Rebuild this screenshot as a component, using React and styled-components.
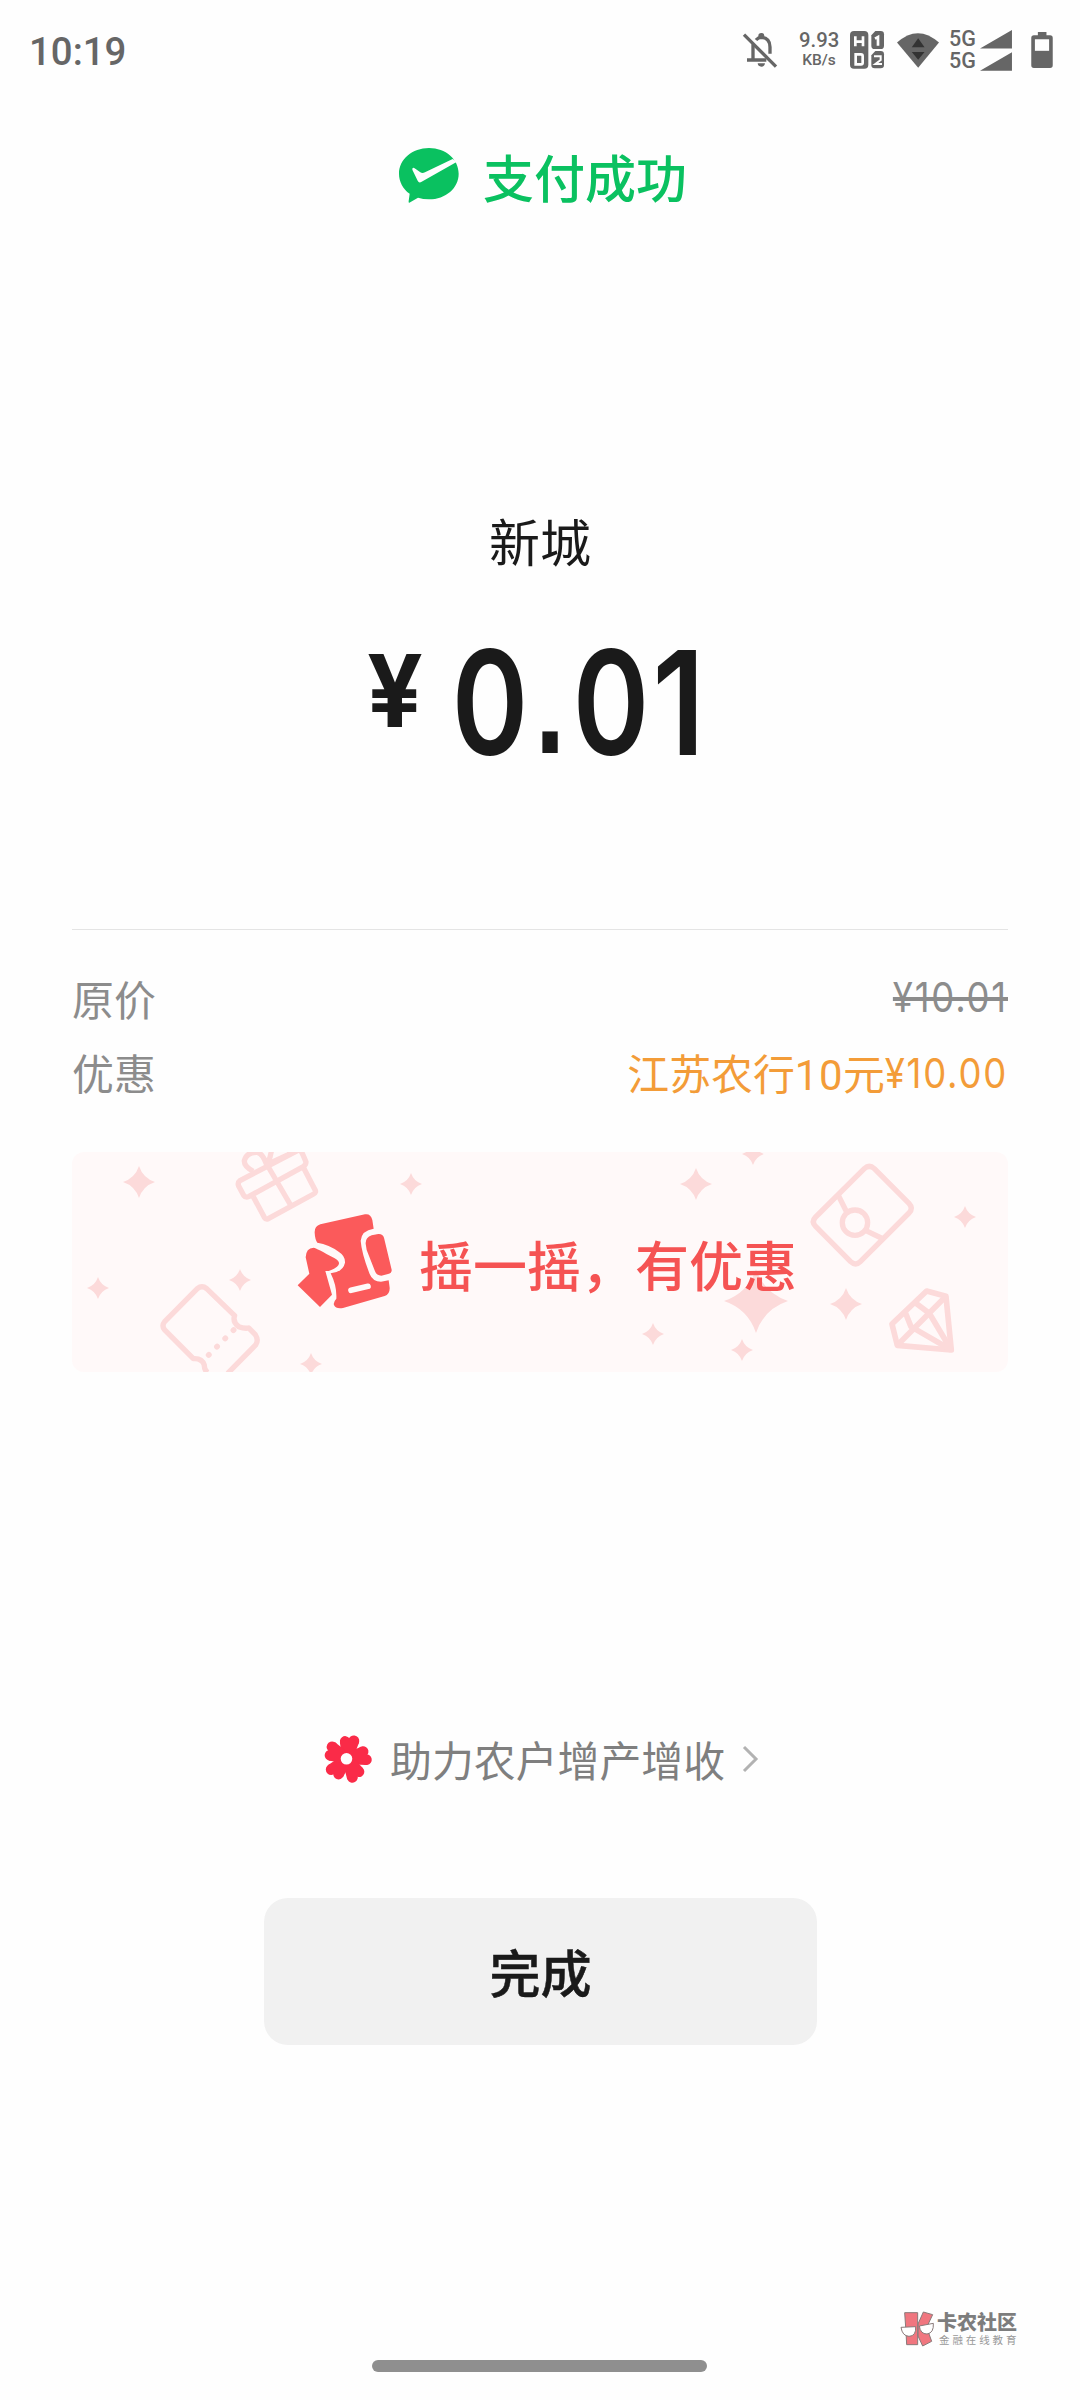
import React from 'react';
import styled, { createGlobalStyle } from 'styled-components';

const GlobalStyle = createGlobalStyle`
  * {
    box-sizing: border-box;
  }
  body {
    margin: 0;
    background: #fefefe;
    font-family: 'Noto Sans CJK SC', sans-serif;
  }
`;

const Page = styled.main`
  width: 1080px;
  height: 2400px;
  display: flex;
  flex-direction: column;
  overflow: hidden;
  background: #fefefe;
`;

const StatusBar = styled.header`
  height: 100px;
  padding: 0 27px 0 29px;
  display: flex;
  justify-content: space-between;
  font-family: Roboto, sans-serif;
  font-weight: 500;
  color: #666;
`;

const Clock = styled.time`
  font-size: 38.4px;
  line-height: 103px;
`;

const StatusIcons = styled.div`
  height: 40px;
  margin-top: 30px;
  display: flex;
  align-items: center;
`;

const Icon = styled.svg`
  display: block;
  flex: none;
  overflow: visible;
  width: ${props => props.$w}px;
  height: ${props => props.$h}px;
  margin-left: ${props => props.$ml || 0}px;
`;

const Stack = styled.div`
  width: ${props => props.$w}px;
  margin-left: ${props => props.$ml}px;
  text-align: center;
  white-space: nowrap;
`;

const StackLine = styled.div`
  font-size: ${props => props.$size}px;
  line-height: ${props => props.$lh}px;
`;

const Result = styled.div`
  height: 60px;
  margin-top: 45px;
  padding-left: 399px;
  display: flex;
  align-items: center;
  gap: 24px;
`;

const ResultText = styled.h1`
  margin: 0;
  padding-top: 2px;
  font-size: 51px;
  line-height: 60px;
  font-weight: 500;
  color: #0ac160;
`;

const Merchant = styled.div`
  margin-top: 305px;
  font-size: 51px;
  line-height: 60px;
  text-align: center;
  color: #1a1a1a;
`;

const Amount = styled.div`
  height: 130px;
  margin-top: 68px;
  padding-left: 367px;
  display: flex;
  align-items: flex-start;
  font-family: Inter, sans-serif;
  color: #1a1a1a;
`;

const Currency = styled.span`
  width: 83px;
  font-size: 100px;
  line-height: 105px;
  font-weight: 700;
  transform: scaleX(0.98);
  transform-origin: left center;
`;

const Digit = styled.span`
  width: ${props => props.$w}px;
  display: flex;
  justify-content: center;
  font-size: 145px;
  line-height: 130px;
  font-weight: 600;
  transform: scaleX(${props => props.$sx || 0.8});
`;

const Point = styled(Digit)`
  font-family: 'Liberation Sans', sans-serif;
  font-weight: 700;
`;

const Details = styled.section`
  height: 223px;
  margin: 161px 72px 0;
  padding-top: 30px;
  border-top: 1px solid #e4e4e4;
`;

const DetailRow = styled.div`
  height: 74px;
  display: flex;
  justify-content: space-between;
  font-size: 41.9px;
  line-height: 75px;
  color: ${props => props.$color || '#8c8c8c'};
`;

const DetailLabel = styled.span`
  color: #8c8c8c;
`;

const DetailValue = styled.span`
  display: flex;
`;

const Latin = styled.span`
  font-family: Roboto, sans-serif;
  letter-spacing: 0.6px;
`;

const Price = styled.span`
  font-family: Inter, sans-serif;
  font-size: 41px;
  line-height: ${props => props.$lh}px;
  letter-spacing: 2px;
  width: 123px;
  display: flex;
  justify-content: flex-end;
  text-decoration: ${props => (props.$struck ? 'line-through' : 'none')};
  transform: scaleX(0.89);
  transform-origin: right center;
`;

const Banner = styled.section`
  position: relative;
  height: 220px;
  margin: 0 72px;
  padding-left: 221px;
  display: flex;
  align-items: center;
  gap: 23px;
  border-radius: 12px;
  background: #fff9f9;
  overflow: hidden;
`;

const Pattern = styled.svg`
  position: absolute;
  inset: 0;
  width: 936px;
  height: 220px;
`;

const BannerText = styled.div`
  position: relative;
  padding-top: 4px;
  font-size: 54px;
  line-height: 80px;
  font-weight: 500;
  color: #f55353;
`;

const FarmLink = styled.div`
  height: 60px;
  margin-top: 357px;
  padding-left: 323px;
  display: flex;
  align-items: center;
  font-size: 41.9px;
  line-height: 60px;
  color: #7f7f7f;
`;

const FarmText = styled.span`
  margin-left: 19px;
`;

const DoneButton = styled.button`
  width: 553px;
  height: 147px;
  margin: 109px auto 0 264px;
  padding: 0;
  flex: none;
  border: 0;
  border-radius: 24px;
  background: #f1f1f1;
  font: 500 51px/147px 'Noto Sans CJK SC', sans-serif;
  -webkit-text-stroke: 0.5px #1a1a1a;
  color: #1a1a1a;
`;

const Watermark = styled.div`
  height: 40px;
  margin-top: 264px;
  padding-left: 900px;
  display: flex;
  align-items: center;
  gap: 3px;
`;

const Brand = styled.div`
  font-size: 20px;
  line-height: 20px;
  font-weight: 900;
  color: #7d7d7d;
  white-space: nowrap;
`;

const Tagline = styled.div`
  font-size: 10.5px;
  line-height: 15px;
  letter-spacing: 2.9px;
  padding-left: 2px;
  color: #999;
  white-space: nowrap;
`;

const HomeBar = styled.div`
  width: 335px;
  height: 12px;
  margin: 11px auto 0 372px;
  border-radius: 6px;
  background: #8f8f8f;
`;

const BellOff = () => (
  <Icon $w={34} $h={35} viewBox="68 70 102 105" fill="none" stroke="#666" strokeWidth="10">
    <path d="M98 104V151M80 151H138M107 91Q114 83 123 83Q149 85 149 112V132" />
    <path d="M71 75L167 171" />
    <path d="M114 86V78Q114 70 123 70Q132 70 132 78V86ZM112 161H134Q133 171 123 171Q113 171 112 161Z" fill="#666" stroke="none" />
  </Icon>
);

const DualSim = () => (
  <Icon $w={34} $h={38} $ml={11} viewBox="388 62 102 114">
    <rect x="388" y="62" width="55" height="113" rx="12" fill="#666" />
    <path d="M464 62H480Q490 62 490 72V106Q490 116 480 116H462Q452 116 452 106V75Z" fill="#666" />
    <path d="M464 122H480Q490 122 490 132V164Q490 174 480 174H462Q452 174 452 164V135Z" fill="#666" />
    <path d="M404 78V108M427 78V108M404 94H427" stroke="#fefefe" strokeWidth="8" fill="none" />
    <path d="M405 132H421Q426 132 426 138V157Q426 162 421 162H405Z" stroke="#fefefe" strokeWidth="8" fill="none" />
    <path d="M463 85L472 80V106" stroke="#fefefe" strokeWidth="8" fill="none" />
    <path d="M460 138H480V149L464 161H484" stroke="#fefefe" strokeWidth="6" fill="none" />
  </Icon>
);

const Wifi = () => (
  <Icon $w={42} $h={35} $ml={13} viewBox="528 65 125 103">
    <path d="M528 93Q590 37 653 93L591 168Z" fill="#666" />
    <path d="M591 80L610 107H572ZM591 144L572 121H610Z" fill="#333" />
  </Icon>
);

const Signal = () => (
  <Icon $w={32} $h={41} $ml={4} viewBox="778 56 95 122" fill="#666">
    <path d="M873 56V111H778ZM873 122V177H778Z" />
  </Icon>
);

const Battery = () => (
  <Icon $w={22} $h={36} $ml={19} viewBox="930 66 65 109">
    <path d="M950 66H976V76H987Q995 76 995 84V167Q995 175 987 175H938Q930 175 930 167V84Q930 76 938 76H950Z" fill="#666" />
    <path d="M941 88H984V123H941Z" fill="#fefefe" />
  </Icon>
);

const PayLogo = () => (
  <Icon $w={60} $h={55} viewBox="88 83 180 165">
    <path d="M178 83C228 83 267 117 267 160C267 203 228 237 178 237Q160 237 145 232L119 247Q116 248 117 242L120 220C100 206 88 184 88 160C88 117 128 83 178 83Z" fill="#0ac160" />
    <path d="M128 148Q127 139 137 145L152 156Q158 160 166 156L249 116L262 124L156 184Q148 190 144 181Z" fill="#fefefe" />
  </Icon>
);

const Hand = styled(Icon)`
  position: relative;
`;

const ShakeHand = () => (
  <Hand $w={103} $h={100} viewBox="40 66 309 300">
    <path
      d="M105 128Q104 109 122 103L256 73Q273 70 278 90L282 116Q246 121 243 152Q246 190 270 252Q279 275 304 275L327 271L330 293Q331 312 315 318L190 354Q169 358 163 345Q160 337 170 326Q172 288 153 250Q190 246 196 218Q197 198 178 186Q148 163 113 158Q106 148 105 128Z"
      fill="#fb5a5b"
    />
    <path d="M78 202Q79 174 102 173Q110 174 165 205Q187 217 172 230Q151 245 137 243L157 314L121 351L54 286L89 251Z" fill="#fb5a5b" />
    <path d="M258 161Q257 142 276 136L296 132Q309 131 313 143L336 239Q337 249 325 252L305 257Q291 257 286 244L261 180Z" fill="#fb5a5b" />
    <path d="M214 301L265 289" stroke="#fff9f9" strokeWidth="17" strokeLinecap="round" />
  </Hand>
);

// x, y, radius
const stars = [
  [67, 30, 16],
  [339, 32, 11],
  [26, 136, 11],
  [168, 128, 11],
  [239, 212, 11],
  [624, 32, 16],
  [681, 2, 11],
  [893, 65, 11],
  [684, 149, 32],
  [774, 152, 16],
  [581, 182, 11],
  [670, 198, 11],
];

const starPath = (x, y, r) => {
  const k = r * 0.25;
  return `M${x} ${y - r}Q${x + k} ${y - k} ${x + r} ${y}Q${x + k} ${y + k} ${x} ${y + r}Q${x - k} ${y + k} ${x - r} ${y}Q${x - k} ${y - k} ${x} ${y - r}Z`;
};

const BannerPattern = () => (
  <Pattern viewBox="0 0 936 220">
    <g fill="#fcdada">
      {stars.map(([x, y, r]) => (
        <path key={`${x}-${y}`} d={starPath(x, y, r)} />
      ))}
    </g>
    <g fill="none" stroke="#fcdada" strokeWidth="16" strokeLinejoin="round" strokeLinecap="butt">
      <g transform="translate(-12 -12) scale(0.3333)">
        {/* gift */}
        <path d="M540 122L720 28Q727 38 738 66Q738 74 730 80L566 170Q557 174 551 166L536 138Q532 128 540 122Z" />
        <path d="M580 170L613 232Q617 239 625 236L761 162Q770 157 765 149L730 82M620 72L690 192" />
        <path d="M620 74Q608 40 592 37Q560 36 553 62Q552 80 580 94M620 74L685 44Q700 32 700 20M622 70Q634 48 634 30" />
        {/* ticket */}
        <path d="M443 698Q432 690 433 675Q426 654 400 656L314 570Q304 557 314 545L412 446Q426 435 440 446L524 527Q517 545 536 560Q554 567 566 564L586 584Q597 601 587 615L503 700" />
        <path d="M446 645L522 569" strokeWidth="17" strokeDasharray="1 34" strokeLinecap="round" />
      </g>
      <g transform="translate(468 -12) scale(0.3333)">
        {/* red packet */}
        <path d="M973 86Q988 72 1003 86L1107 190Q1121 205 1107 219L961 365Q947 379 932 365L827 259Q813 245 827 231Z" />
        <circle cx="945" cy="248" r="38" />
        <path d="M896 168L920 216M978 272L1030 297" />
        {/* diamond */}
        <path d="M1160 453L1218 469L1234 630L1072 616L1056 552Z" strokeWidth="17" />
        <path d="M1072 616L1218 469M1234 630L1113 560L1097 520M1234 630L1168 520L1128 490" strokeWidth="17" />
      </g>
    </g>
  </Pattern>
);

const Flower = () => (
  <Icon $w={48} $h={48} viewBox="71 105 141 141" fill="#fa2b48">
    {[8, 80, 152, 224, 296].map(angle => (
      <g key={angle} transform={`translate(142 175) rotate(${angle})`}>
        <circle cx="-13" cy="-50" r="15.5" />
        <circle cx="12" cy="-55" r="16" />
        <path d="M-28 -46L-16 0H16L28 -53L0 -60Z" />
      </g>
    ))}
    <circle cx="140" cy="175" r="17" fill="#fefefe" />
  </Icon>
);

const Chevron = () => (
  <Icon $w={15} $h={26} $ml={18} viewBox="0 0 15 26" fill="none" stroke="#b2b2b2" strokeWidth="3">
    <path d="M1 1L13 13L1 25" />
  </Icon>
);

const WatermarkLogo = () => (
  <Icon $w={34} $h={36} viewBox="120 68 102 106" stroke="#8a7a7a" strokeWidth="3">
    <path d="M134 72H173V168H140L138 130ZM174 106L190 70L218 78L200 116L215 158L188 172L174 142Z" fill="#f0767f" />
    <path d="M123 116L167 114Q169 142 147 143Q127 142 123 116ZM178 112L220 104Q222 133 201 136Q181 136 178 112Z" fill="#fff" />
  </Icon>
);

const App = () => {
  return (
    <Page>
      <GlobalStyle />
      <StatusBar>
        <Clock>10:19</Clock>
        <StatusIcons>
          <BellOff />
          <Stack $w={40} $ml={22}>
            <StackLine $size={20.3} $lh={21}>9.93</StackLine>
            <StackLine $size={15.5} $lh={19}>KB/s</StackLine>
          </Stack>
          <DualSim />
          <Wifi />
          <Stack $w={27} $ml={10}>
            <StackLine $size={21.5} $lh={22}>5G</StackLine>
            <StackLine $size={21.5} $lh={22}>5G</StackLine>
          </Stack>
          <Signal />
          <Battery />
        </StatusIcons>
      </StatusBar>

      <Result>
        <PayLogo />
        <ResultText>支付成功</ResultText>
      </Result>

      <Merchant>新城</Merchant>
      <Amount>
        <Currency>¥</Currency>
        <Digit $w={80}>0</Digit>
        <Point $w={40} $sx={0.75}>.</Point>
        <Digit $w={82}>0</Digit>
        <Digit $w={53} $sx={0.86}>1</Digit>
      </Amount>

      <Details>
        <DetailRow>
          <DetailLabel>原价</DetailLabel>
          <Price $struck $lh={74}>¥10.01</Price>
        </DetailRow>
        <DetailRow $color="#f39c38">
          <DetailLabel>优惠</DetailLabel>
          <DetailValue>
            <span>
              江苏农行<Latin>10</Latin>元
            </span>
            <Price $lh={78}>¥10.00</Price>
          </DetailValue>
        </DetailRow>
      </Details>

      <Banner>
        <BannerPattern />
        <ShakeHand />
        <BannerText>摇一摇，有优惠</BannerText>
      </Banner>

      <FarmLink>
        <Flower />
        <FarmText>助力农户增产增收</FarmText>
        <Chevron />
      </FarmLink>

      <DoneButton>完成</DoneButton>

      <Watermark>
        <WatermarkLogo />
        <div>
          <Brand>卡农社区</Brand>
          <Tagline>金融在线教育</Tagline>
        </div>
      </Watermark>
      <HomeBar />
    </Page>
  );
};

export default App;
